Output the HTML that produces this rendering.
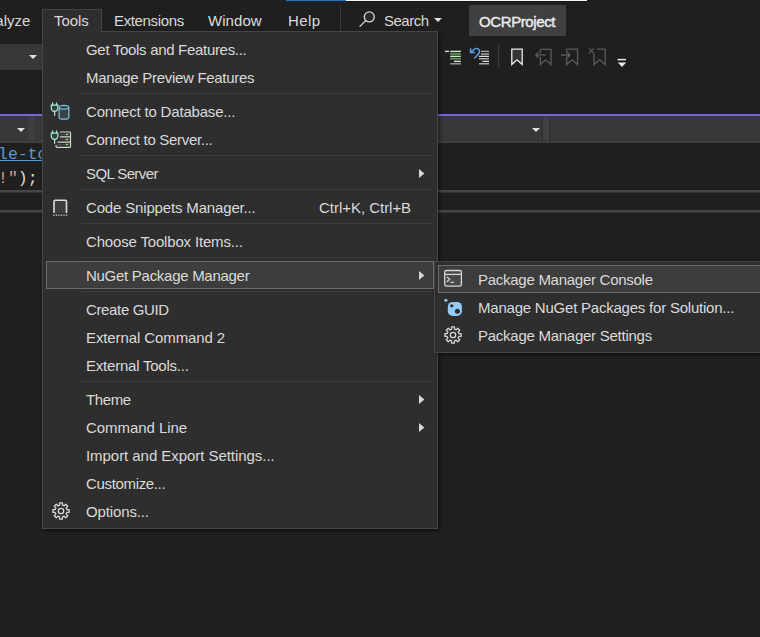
<!DOCTYPE html>
<html><head><meta charset="utf-8">
<style>
*{box-sizing:border-box;margin:0;padding:0}
html,body{width:760px;height:637px;overflow:hidden;background:#1f1f1f}
body{position:relative;font-family:"Liberation Sans",sans-serif;font-size:15px;color:#dadada}
.a{position:absolute}
.t{position:absolute;white-space:pre;line-height:18px;height:18px}
.sep{position:absolute;height:1px;background:#3f3f3f}
.arr{position:absolute;width:0;height:0;border-top:4px solid transparent;border-bottom:4px solid transparent;border-left:5px solid #d8d8d8}
.dd{position:absolute;width:0;height:0;border-left:4px solid transparent;border-right:4px solid transparent;border-top:4px solid #e0e0e0}
svg{position:absolute;overflow:visible}
</style></head><body>

<div class="a" style="left:286px;top:0;width:60px;height:1px;background:#3574a8"></div>
<div class="a" style="left:286px;top:1px;width:60px;height:1px;background:#0d2844"></div>
<div class="a" style="left:346px;top:0;width:241px;height:1px;background:#f6f6f6"></div>
<div class="a" style="left:346px;top:1px;width:241px;height:1px;background:#161616"></div>
<div class="t" style="left:-23px;top:12px;letter-spacing:0px;">Analyze</div>
<div class="t" style="left:114px;top:12px;letter-spacing:-0.36px;">Extensions</div>
<div class="t" style="left:208px;top:12px;letter-spacing:0.06px;">Window</div>
<div class="t" style="left:288px;top:12px;letter-spacing:0.4px;">Help</div>
<div class="a" style="left:340px;top:6px;width:1px;height:25px;background:#3a3a3a"></div>
<svg style="left:357px;top:9px" width="20" height="20" viewBox="0 0 20 20"><circle cx="12.3" cy="7.9" r="5.0" fill="#2a2a2a" stroke="#d8d8d8" stroke-width="1.3"/><path d="M8.7 11.6 L3 17.4" stroke="#d8d8d8" stroke-width="1.3" stroke-linecap="round"/></svg>
<div class="t" style="left:384px;top:12px;letter-spacing:-0.5px;">Search</div>
<div class="dd" style="left:434px;top:18px"></div>
<div class="a" style="left:469px;top:5px;width:97px;height:31px;background:#404040"></div>
<div class="t" style="left:479px;top:13px;-webkit-text-stroke:0.4px #eee;letter-spacing:-0.4px;color:#eee">OCRProject</div>
<div class="a" style="left:0;top:44px;width:42px;height:26px;background:#383838"></div>
<div class="dd" style="left:29px;top:55px"></div>
<div class="a" style="left:0;top:114px;width:760px;height:2px;background:#7867da"></div>
<div class="a" style="left:0;top:116px;width:760px;height:27px;background:#383838"></div>
<div class="a" style="left:0;top:141px;width:760px;height:2px;background:#3f3f3f"></div>
<div class="a" style="left:28px;top:116px;width:6px;height:27px;background:#3e3e3e"></div>
<div class="a" style="left:542px;top:116px;width:1px;height:27px;background:#303030"></div><div class="a" style="left:543px;top:116px;width:6px;height:27px;background:#404040"></div><div class="a" style="left:549px;top:116px;width:2px;height:27px;background:#343434"></div>
<div class="dd" style="left:17px;top:128px"></div>
<div class="dd" style="left:532px;top:128px"></div>
<div class="a" style="left:0;top:190px;width:760px;height:3px;background:linear-gradient(#464646 0,#464646 66%,#333 66%)"></div>
<div class="a" style="left:0;top:210px;width:760px;height:3px;background:linear-gradient(#464646 0,#464646 66%,#333 66%)"></div>
<div class="t" style="left:-2px;top:146px;font-family:'Liberation Mono',monospace;font-size:16.5px;color:#569cd6;text-decoration:underline">le-to</div>
<div class="t" style="left:-2px;top:170px;font-family:'Liberation Mono',monospace;font-size:16.5px;color:#dcdcdc"><span style="color:#d69d85">!"</span>);</div>

<svg style="left:0;top:0" width="760" height="637" viewBox="0 0 760 637">
<g stroke-width="1.4"><path d="M445 51.4 H449" stroke="#d8d8d8"/><path d="M450.2 51.4 H460.8" stroke="#d6e6d0"/><path d="M450.2 54 H460.8" stroke="#6fae6a"/><path d="M450.2 56.4 H460.8" stroke="#c8ecc0"/><path d="M450.2 58.8 H460.8" stroke="#62a85e"/><path d="M454 61.4 H460.8" stroke="#e0e0e0"/><path d="M450.2 63.8 H460.8" stroke="#a0a0a0"/></g>
<g transform="translate(468,44)" stroke-width="1.4"><path d="M13 7.4 H21 M13 10 H21 M11 14.8 H21 M11 19.8 H21" stroke="#a8a8a8"/><path d="M11 12.4 H21 M14.4 17.4 H21" stroke="#e0e0e0"/><path d="M2.6 4.2 V8.6 H6.8" fill="none" stroke="#5fa4ea" stroke-width="1.5"/><path d="M2.8 8.4 L5.8 5.5 Q8.5 3.4 10.6 5.2 Q12.6 7.3 10.5 9.8 L6.3 14.6" fill="none" stroke="#5fa4ea" stroke-width="1.4"/></g>
<path d="M498.6 44.2 V67.5" stroke="#3f3f3f" stroke-width="1"/>
<path d="M511.8 49.2 H522.2 V64.6 L517 59.8 L511.8 64.6 Z" fill="#353535" stroke="#ececec" stroke-width="1.3" stroke-linejoin="miter"/>
<g fill="none" stroke="#5c5c5c" stroke-width="1.3"><path d="M540.4 49.4 H551 V64.6 L545.7 59.8 L540.4 64.6 V56.8 M540.4 53 V49.4"/><path d="M535.8 54.9 H545.5 M538.6 52.1 L535.8 54.9 L538.6 57.7"/></g>
<g fill="none" stroke="#5c5c5c" stroke-width="1.3"><path d="M566.6 49.2 H577.6 V64.6 L572.1 59.8 L566.6 64.6 V56.8 M566.6 53 V49.2"/><path d="M561 55 H570 M567.2 52.2 L570 55 L567.2 57.8"/></g>
<g fill="none" stroke="#5c5c5c" stroke-width="1.3"><path d="M597 49.2 H605.2 V64.6 L599.6 59.8 L594 64.6 V53.5"/><path d="M589 48.4 L594 53.4 M594 48.4 L589 53.4"/></g>
<path d="M617.6 59.6 H626" stroke="#e8e8e8" stroke-width="1.5"/><path d="M617.8 62.6 H626.2 L622 67 Z" fill="#e8e8e8"/>
</svg>
<div class="a" style="left:42px;top:31px;width:396px;height:498px;background:#2e2e2e;border:1px solid #454545;border-top:none;box-shadow:2px 2px 3px rgba(0,0,0,0.4)"></div>
<div class="a" style="left:42px;top:9px;width:60px;height:23px;background:#2e2e2e;border:1px solid #454545;border-bottom:none"></div>
<div class="t" style="left:54px;top:12px;letter-spacing:-0.07px;">Tools</div>
<div class="a" style="left:101px;top:31px;width:337px;height:1px;background:#454545"></div>
<div class="a" style="left:46px;top:261px;width:388px;height:28px;background:#3d3d3d;border:1px solid #6b6b6b"></div>
<div class="t" style="left:86px;top:41px;letter-spacing:-0.31px;">Get Tools and Features...</div>
<div class="t" style="left:86px;top:69px;letter-spacing:-0.3px;">Manage Preview Features</div>
<div class="sep" style="left:81px;top:93px;width:351px"></div>
<div class="t" style="left:86px;top:103px;letter-spacing:-0.19px;">Connect to Database...</div>
<div class="t" style="left:86px;top:131px;letter-spacing:-0.31px;">Connect to Server...</div>
<div class="sep" style="left:81px;top:155px;width:351px"></div>
<div class="t" style="left:86px;top:165px;letter-spacing:-0.6px;">SQL Server</div>
<svg style="left:0;top:0" width="760" height="637"><path d="M419 169.1 L424.4 173.5 L419 177.9 Z" fill="#d8d8d8"/></svg>
<div class="sep" style="left:81px;top:189px;width:351px"></div>
<div class="t" style="left:86px;top:199px;letter-spacing:-0.16px;">Code Snippets Manager...</div>
<div class="t" style="left:319px;top:199px;letter-spacing:-0.03px;">Ctrl+K, Ctrl+B</div>
<div class="sep" style="left:81px;top:223px;width:351px"></div>
<div class="t" style="left:86px;top:233px;letter-spacing:-0.17px;">Choose Toolbox Items...</div>
<div class="sep" style="left:81px;top:257px;width:351px"></div>
<div class="t" style="left:86px;top:267px;letter-spacing:-0.28px;">NuGet Package Manager</div>
<svg style="left:0;top:0" width="760" height="637"><path d="M419 271.1 L424.4 275.5 L419 279.9 Z" fill="#d8d8d8"/></svg>
<div class="sep" style="left:81px;top:291px;width:351px"></div>
<div class="t" style="left:86px;top:301px;letter-spacing:-0.36px;">Create GUID</div>
<div class="t" style="left:86px;top:329px;letter-spacing:-0.1px;">External Command 2</div>
<div class="t" style="left:86px;top:357px;letter-spacing:-0.22px;">External Tools...</div>
<div class="sep" style="left:81px;top:381px;width:351px"></div>
<div class="t" style="left:86px;top:391px;letter-spacing:-0.4px;">Theme</div>
<svg style="left:0;top:0" width="760" height="637"><path d="M419 395.1 L424.4 399.5 L419 403.9 Z" fill="#d8d8d8"/></svg>
<div class="t" style="left:86px;top:419px;letter-spacing:-0.05px;">Command Line</div>
<svg style="left:0;top:0" width="760" height="637"><path d="M419 423.1 L424.4 427.5 L419 431.9 Z" fill="#d8d8d8"/></svg>
<div class="t" style="left:86px;top:447px;letter-spacing:-0.05px;">Import and Export Settings...</div>
<div class="t" style="left:86px;top:475px;letter-spacing:-0.34px;">Customize...</div>
<div class="t" style="left:86px;top:503px;letter-spacing:-0.13px;">Options...</div>
<svg style="left:0;top:0" width="760" height="637" viewBox="0 0 760 637">
<g transform="translate(48,99)" fill="none" stroke="#a8eedc" stroke-width="1.2" stroke-linecap="round"><path d="M4.6 3.9 V6 M8.5 3.9 V6"/><path d="M3.3 6.2 H9.9 V8.6 Q9.9 12.4 6.6 12.4 Q3.3 12.4 3.3 8.6 Z" fill="#33403d"/><path d="M6.6 12.4 V16.3"/></g>
<g transform="translate(48,99)" stroke="#7cc3e6" stroke-width="1.2" fill="#3a4048"><path d="M11.1 8.3 V18.4 Q11.1 20.2 15.95 20.2 Q20.8 20.2 20.8 18.4 V8.3"/><ellipse cx="15.95" cy="8.3" rx="4.85" ry="1.9"/></g>
<g transform="translate(48,127)" fill="none" stroke="#a8eedc" stroke-width="1.2" stroke-linecap="round"><path d="M4.6 3.9 V6 M8.5 3.9 V6"/><path d="M3.3 6.2 H9.9 V8.6 Q9.9 12.4 6.6 12.4 Q3.3 12.4 3.3 8.6 Z" fill="#33403d"/><path d="M6.6 12.4 V16.3"/></g>
<g transform="translate(48,127)" fill="none" stroke="#d4d4d4" stroke-width="1.2"><path d="M12 5 H21.8 Q22.5 5 22.5 5.7 V19.6 Q22.5 20.3 21.8 20.3 H8.7 Q8 20.3 8 19.6 V18"/><path d="M12 9.9 H22.5 M9.5 15.1 H22.5"/><path d="M12 7.6 H17 M12 12.5 H17 M9 17.6 H17" stroke="#4a4a4a"/><path d="M17.6 7.5 H20.3 M17.6 12.5 H20.3 M17.6 17.6 H20.3" stroke="#8fd07a" stroke-width="1.5"/></g>
<g fill="none" stroke="#dcdcdc" stroke-width="1.6"><path d="M54 213 V201.4 Q54 200.3 55.1 200.3 H65.4 Q66.5 200.3 66.5 201.4 V213" fill="#3d3d3d"/><path d="M53.2 215.2 H67.4" stroke-dasharray="1.3 1.25" stroke-width="1.3"/></g>
<path d="M59.55 505.18 L59.55 502.90 L62.45 502.90 L62.45 505.18 L64.09 505.86 L65.70 504.25 L67.75 506.30 L66.14 507.91 L66.82 509.55 L69.10 509.55 L69.10 512.45 L66.82 512.45 L66.14 514.09 L67.75 515.70 L65.70 517.75 L64.09 516.14 L62.45 516.82 L62.45 519.10 L59.55 519.10 L59.55 516.82 L57.91 516.14 L56.30 517.75 L54.25 515.70 L55.86 514.09 L55.18 512.45 L52.90 512.45 L52.90 509.55 L55.18 509.55 L55.86 507.91 L54.25 506.30 L56.30 504.25 L57.91 505.86 Z" fill="none" stroke="#d8d8d8" stroke-width="1.3" stroke-linejoin="round"/><circle cx="61" cy="511" r="2.7" fill="none" stroke="#d8d8d8" stroke-width="1.3"/>
</svg>
<div class="a" style="left:434px;top:261px;width:340px;height:92px;background:#2e2e2e;border:1px solid #454545;box-shadow:2px 2px 3px rgba(0,0,0,0.4)"></div>
<div class="a" style="left:438px;top:265px;width:330px;height:28px;background:#3d3d3d;border:1px solid #6b6b6b"></div>
<div class="t" style="left:478px;top:271px;letter-spacing:-0.27px;">Package Manager Console</div>
<div class="t" style="left:478px;top:299px;letter-spacing:-0.22px;">Manage NuGet Packages for Solution...</div>
<div class="t" style="left:478px;top:327px;letter-spacing:-0.26px;">Package Manager Settings</div>
<svg style="left:0;top:0" width="760" height="637" viewBox="0 0 760 637">
<g fill="none" stroke="#d8d8d8" stroke-width="1.3"><rect x="444.7" y="270.5" width="16.7" height="15.7" rx="1.8" fill="#474747"/><path d="M444.7 274.4 H461.4"/><path d="M447.3 277.2 L449.6 279.3 L447.3 281.5" stroke-linecap="round"/><path d="M450.4 282.3 H454.1" stroke-width="1.2"/></g>
<g><circle cx="445.9" cy="300.3" r="1.5" fill="#92cbf5"/><rect x="447.8" y="301.9" width="14.1" height="14.1" rx="4.8" fill="#92cbf5"/><circle cx="451.8" cy="305.8" r="1.6" fill="#2a2a2a"/><circle cx="457.4" cy="311.2" r="2.5" fill="#2a2a2a"/></g>
<path d="M451.55 329.18 L451.55 326.90 L454.45 326.90 L454.45 329.18 L456.09 329.86 L457.70 328.25 L459.75 330.30 L458.14 331.91 L458.82 333.55 L461.10 333.55 L461.10 336.45 L458.82 336.45 L458.14 338.09 L459.75 339.70 L457.70 341.75 L456.09 340.14 L454.45 340.82 L454.45 343.10 L451.55 343.10 L451.55 340.82 L449.91 340.14 L448.30 341.75 L446.25 339.70 L447.86 338.09 L447.18 336.45 L444.90 336.45 L444.90 333.55 L447.18 333.55 L447.86 331.91 L446.25 330.30 L448.30 328.25 L449.91 329.86 Z" fill="none" stroke="#d8d8d8" stroke-width="1.3" stroke-linejoin="round"/><circle cx="453" cy="335" r="2.7" fill="none" stroke="#d8d8d8" stroke-width="1.3"/>
</svg>
</body></html>
